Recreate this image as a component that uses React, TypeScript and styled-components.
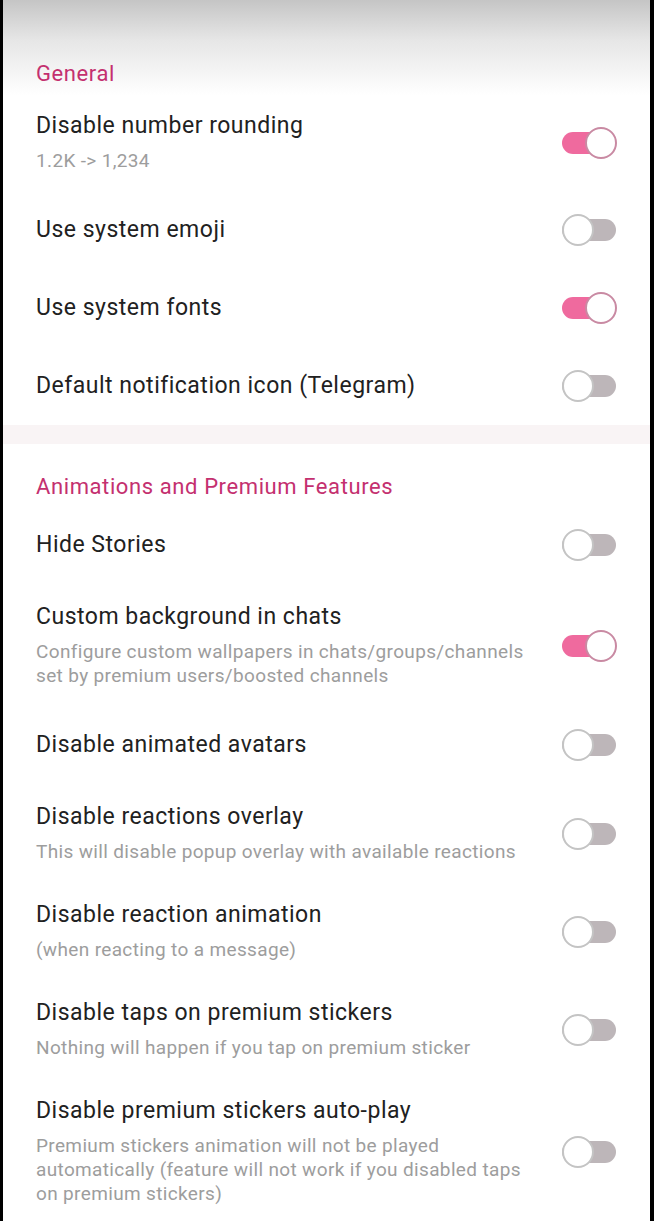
import React from 'react';
import styled, { createGlobalStyle } from 'styled-components';

const GlobalStyle = createGlobalStyle`
	html, body {
		margin: 0;
		padding: 0;
		background: #000;
	}

	body {
		font-family: Roboto, 'Noto Sans', 'Liberation Sans', sans-serif;
		-webkit-font-smoothing: antialiased;
	}
`;

const StyledPage = styled.div`
	margin: 0 4px 0 3px;
	min-height: 1221px;
	background-color: #fff;
	background-image: linear-gradient(#c5c5c5 0, #e6e6e6 40px, #fff 95px);
	background-repeat: no-repeat;
	padding-top: 31px;
`;

const SectionHeader = styled.div`
	padding: 29px 33px 5px;
	font-size: 22px;
	line-height: 28px;
	font-weight: 400;
	color: #c4306f;
	letter-spacing: 0.6px;
`;

const Divider = styled.div`
	height: 19px;
	background-color: #f9f4f5;
`;

const Row = styled.div<{ $tall: boolean }>`
	display: flex;
	align-items: center;
	padding: ${(p) => (p.$tall ? '19px 33px 18px' : '0 33px')};
	min-height: ${(p) => (p.$tall ? '0' : '78px')};
	box-sizing: border-box;
`;

const TextColumn = styled.div`
	flex: 1;
	min-width: 0;
	display: flex;
	flex-direction: column;
	gap: 9px;
`;

const Title = styled.div`
	font-size: 23px;
	line-height: 28px;
	letter-spacing: 0.5px;
	color: #212121;
`;

const Subtitle = styled.div`
	font-size: 19px;
	line-height: 24px;
	letter-spacing: 0.35px;
	color: #9d9d9d;
`;

const Switch = styled.div<{ $on: boolean }>`
	position: relative;
	flex-shrink: 0;
	width: 55px;
	height: 32px;
	margin-left: 24px;

	.switch__track {
		position: absolute;
		left: 0;
		top: 5px;
		width: 54px;
		height: 22px;
		border-radius: 11px;
		background-color: ${(p) => (p.$on ? '#ef6a9e' : '#bdb6b9')};
	}

	.switch__thumb {
		position: absolute;
		top: 0;
		left: ${(p) => (p.$on ? '23px' : '0')};
		width: 32px;
		height: 32px;
		box-sizing: border-box;
		border-radius: 50%;
		background-color: #fff;
		border: 2px solid ${(p) => (p.$on ? '#c98aa3' : '#c4c4c4')};
	}
`;

type Setting = {
	title: string;
	subtitle?: string;
	on: boolean;
};

const general: Setting[] = [
	{ title: 'Disable number rounding', subtitle: '1.2K -> 1,234', on: true },
	{ title: 'Use system emoji', on: false },
	{ title: 'Use system fonts', on: true },
	{ title: 'Default notification icon (Telegram)', on: false },
];

const animations: Setting[] = [
	{ title: 'Hide Stories', on: false },
	{
		title: 'Custom background in chats',
		subtitle: 'Configure custom wallpapers in chats/groups/channels set by premium users/boosted channels',
		on: true,
	},
	{ title: 'Disable animated avatars', on: false },
	{
		title: 'Disable reactions overlay',
		subtitle: 'This will disable popup overlay with available reactions',
		on: false,
	},
	{
		title: 'Disable reaction animation',
		subtitle: '(when reacting to a message)',
		on: false,
	},
	{
		title: 'Disable taps on premium stickers',
		subtitle: 'Nothing will happen if you tap on premium sticker',
		on: false,
	},
	{
		title: 'Disable premium stickers auto-play',
		subtitle:
			'Premium stickers animation will not be played automatically (feature will not work if you disabled taps on premium stickers)',
		on: false,
	},
];

const SettingRow = ({ setting }: { setting: Setting }) => {
	return (
		<Row $tall={!!setting.subtitle}>
			<TextColumn>
				<Title>{setting.title}</Title>
				{setting.subtitle && <Subtitle>{setting.subtitle}</Subtitle>}
			</TextColumn>
			<Switch $on={setting.on}>
				<div className='switch__track'></div>
				<div className='switch__thumb'></div>
			</Switch>
		</Row>
	);
};

const App = () => {
	return (
		<>
			<GlobalStyle />
			<StyledPage>
				<SectionHeader>General</SectionHeader>
				{general.map((s) => (
					<SettingRow key={s.title} setting={s} />
				))}
				<Divider />
				<SectionHeader>Animations and Premium Features</SectionHeader>
				{animations.map((s) => (
					<SettingRow key={s.title} setting={s} />
				))}
			</StyledPage>
		</>
	);
};

export default App;
